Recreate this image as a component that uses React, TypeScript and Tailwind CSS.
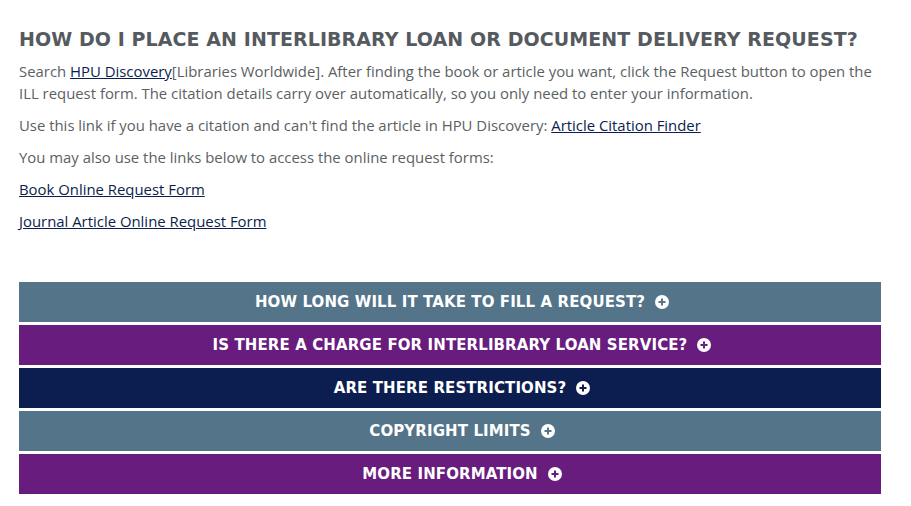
import { Fragment } from "react";

const faqs = [
  { title: "How long will it take to fill a request?", bg: "bg-[#537489]", fg: "text-[#537489]" },
  { title: "Is there a charge for interlibrary loan service?", bg: "bg-[#671c7e]", fg: "text-[#671c7e]" },
  { title: "Are there restrictions?", bg: "bg-[#0c1e4f]", fg: "text-[#0c1e4f]" },
  { title: "Copyright limits", bg: "bg-[#537489]", fg: "text-[#537489]" },
  { title: "More information", bg: "bg-[#671c7e]", fg: "text-[#671c7e]" },
];

function PlusCircle({ fg }: { fg: string }) {
  return (
    <svg viewBox="0 0 14 14" className={`w-[14px] h-[14px] ${fg}`}>
      <circle cx="7" cy="7" r="7" fill="white" />
      <path d="M7 3.5v7M3.5 7h7" stroke="currentColor" strokeWidth="2" />
    </svg>
  );
}

export default function App() {
  return (
    <div className="bg-white w-[911px] h-[506px] pl-[19px] pr-[30px] pt-[26px] font-['Open_Sans',sans-serif] text-[#5c5f63]">
      <h2 className="text-[19px] leading-[26px] font-bold uppercase text-[#555a60] tracking-[0.08px] mb-[8px] whitespace-nowrap font-['DejaVu_Sans',sans-serif]">
        How do I place an interlibrary loan or document delivery request?
      </h2>

      <div className="text-[14.9px] leading-[22px] flex flex-col gap-[10px]">
        <p>
          Search <a className="underline text-[#0c1e4f]">HPU Discovery</a>[Libraries Worldwide]. After finding the book or article you want, click the Request button to open the ILL request form. The citation details carry over automatically, so you only need to enter your information.
        </p>
        <p>
          Use this link if you have a citation and can't find the article in HPU Discovery:{" "}
          <a className="underline text-[#0c1e4f]">Article Citation Finder</a>
        </p>
        <p>You may also use the links below to access the online request forms:</p>
        <p>
          <a className="underline text-[#0c1e4f]">Book Online Request Form</a>
        </p>
        <p>
          <a className="underline text-[#0c1e4f]">Journal Article Online Request Form</a>
        </p>
      </div>

      <div className="mt-[50px] flex flex-col gap-[3px]">
        {faqs.map((f) => (
          <Fragment key={f.title}>
            <div className={`${f.bg} h-[40px] pl-[24px] flex items-center justify-center gap-[10px] text-white`}>
              <span className="uppercase font-bold text-[15px] tracking-[0.1px] font-['DejaVu_Sans',sans-serif]">{f.title}</span>
              <PlusCircle fg={f.fg} />
            </div>
          </Fragment>
        ))}
      </div>
    </div>
  );
}
